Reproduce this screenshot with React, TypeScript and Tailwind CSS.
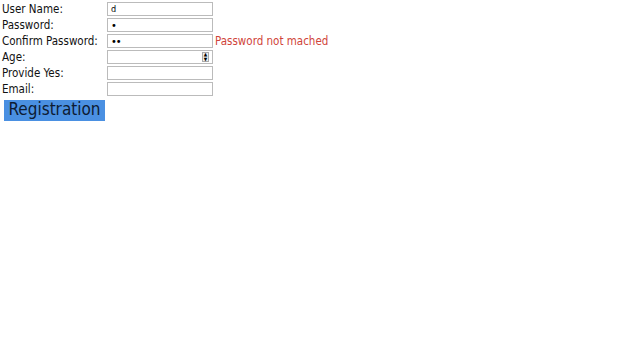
export default function App() {
  const rows = [
    { label: "User Name:", value: "d", type: "text" },
    { label: "Password:", value: "•", type: "text" },
    { label: "Confirm Password:", value: "••", type: "text", error: "Password not mached" },
    { label: "Age:", value: "", type: "number" },
    { label: "Provide Yes:", value: "", type: "text" },
    { label: "Email:", value: "", type: "text" },
  ];

  return (
    <main className="h-[360px] w-[640px] bg-white font-['DejaVu_Sans_Condensed','DejaVu_Sans',sans-serif] text-[11.5px] text-[#111]">
      <div className="flex flex-col pl-[2px] pt-[1px]">
        {rows.map((row) => (
          <div key={row.label} className="flex h-[16px] items-center">
            <span className="w-[105px] pt-[2px] leading-none">{row.label}</span>
            <div className="flex h-[14px] w-[106px] items-center justify-between border border-[#bbb] bg-white px-[3px] text-[9px] text-black">
              <span className={row.value.startsWith("•") ? "text-[11px] leading-none tracking-[-1px]" : "leading-none"}>
                {row.value}
              </span>
              {row.type === "number" ? (
                <span className="flex h-[10px] w-[7px] flex-col items-center justify-center border border-[#aaa] bg-[#eee] text-[5px] leading-[5px]">
                  <span>▲</span>
                  <span>▼</span>
                </span>
              ) : null}
            </div>
            {row.error ? <span className="ml-[2px] pt-[2px] leading-none text-[#d0443a]">{row.error}</span> : null}
          </div>
        ))}
        <div className="mt-[3px] pl-[2px]">
          <button className="flex h-[21px] w-[101px] items-center justify-center bg-[#4a90e2] pb-[1px] text-[17px] text-[#0d1b33]">
            Registration
          </button>
        </div>
      </div>
    </main>
  );
}
